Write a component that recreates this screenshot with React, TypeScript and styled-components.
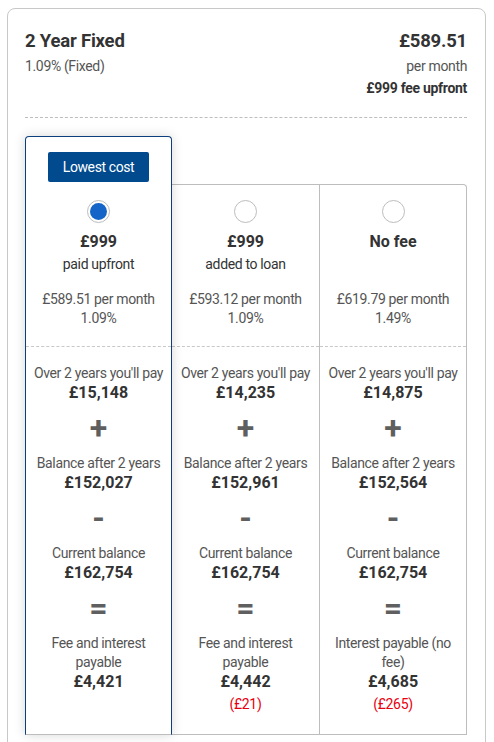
import React from "react";
import styled, { createGlobalStyle } from "styled-components";

const GlobalStyle = createGlobalStyle`
  html, body {
    margin: 0;
    overflow: hidden;
    background: #fff;
    font-family: Roboto, "Liberation Sans", sans-serif;
    color: #333;
  }
`;

const PageSc = styled.div`
  padding: 8px 8px 0 7px;
`;

const CardSc = styled.div`
  border: 1px solid #c8c8c8;
  border-radius: 8px;
  padding: 20px 18px 40px 17px;
`;

const HeaderSc = styled.div`
  display: flex;
  justify-content: space-between;
  align-items: flex-start;
`;

const HeaderSideSc = styled.div<{ $right?: boolean }>`
  display: flex;
  flex-direction: column;
  align-items: ${(p) => (p.$right ? "flex-end" : "flex-start")};
`;

const TitleSc = styled.div`
  font-size: 18.5px;
  font-weight: 700;
  line-height: 24px;
  letter-spacing: -0.2px;
  color: #333;
`;

const SubtleSc = styled.div`
  margin-top: 3px;
  font-size: 14px;
  line-height: 20px;
  letter-spacing: -0.35px;
  color: #555;
`;

const FeeSc = styled.div`
  margin-top: 2px;
  font-size: 14px;
  font-weight: 700;
  line-height: 20px;
  letter-spacing: -0.3px;
  color: #333;
`;

const DividerSc = styled.div`
  margin: 19px 0 18px;
  border-top: 1px dashed #bdbdbd;
`;

const TableSc = styled.div`
  display: grid;
  grid-template-columns: 147px 148px 147px;
  align-items: stretch;
`;

const ColumnSc = styled.div<{ $selected?: boolean; $last?: boolean }>`
  position: relative;
  display: flex;
  flex-direction: column;
  align-items: center;
  text-align: center;
  background: #fff;
  border-bottom: 1px solid #bdbdbd;
  padding-top: 15px;
  ${(p) =>
    p.$selected
      ? `
    z-index: 1;
    border: 1px solid #0d3f7c;
    border-bottom-color: #bdbdbd;
    border-radius: 4px 4px 0 0;
    box-shadow: 0 0 12px rgba(0, 0, 0, 0.16);
  `
      : `
    margin-top: 48px;
    border-top: 1px solid #bdbdbd;
    border-right: 1px solid #bdbdbd;
  `}
  ${(p) => (p.$last ? "border-top-right-radius: 4px;" : "")}
`;

const BadgeSc = styled.div`
  height: 30px;
  padding: 0 15px;
  margin-bottom: 18px;
  display: flex;
  align-items: center;
  background: #004a8d;
  border-radius: 2px;
  color: #fff;
  font-size: 14px;
  letter-spacing: -0.4px;
`;

const RadioSc = styled.div<{ $checked?: boolean }>`
  box-sizing: border-box;
  width: 23px;
  height: 23px;
  border-radius: 50%;
  border: 1px solid #bdbdbd;
  padding: 2px;
  background: #fff;
  &::after {
    content: "";
    display: ${(p) => (p.$checked ? "block" : "none")};
    width: 100%;
    height: 100%;
    border-radius: 50%;
    background: #1565c8;
  }
`;

const OptionTitleSc = styled.div`
  margin-top: 8px;
  font-size: 16px;
  font-weight: 700;
  line-height: 22px;
  color: #333;
`;

const OptionSubSc = styled.div`
  margin-top: 1px;
  height: 20px;
  font-size: 14px;
  line-height: 20px;
  letter-spacing: -0.35px;
  color: #333;
`;

const RateSc = styled.div`
  margin-top: 16px;
  margin-bottom: 18px;
  font-size: 14px;
  line-height: 19px;
  letter-spacing: -0.35px;
  color: #555;
`;

const BreakdownSc = styled.div`
  align-self: stretch;
  display: flex;
  flex-direction: column;
  align-items: center;
  border-top: 1px dashed #c8c8c8;
  padding: 17px 6px 20px;
  flex: 1;
`;

const LabelSc = styled.div`
  font-size: 14px;
  line-height: 19px;
  letter-spacing: -0.35px;
  color: #555;
`;

const ValueSc = styled.div`
  font-size: 16px;
  font-weight: 700;
  line-height: 20px;
  color: #333;
`;

const SignSc = styled.div`
  height: 51px;
  font-size: 32px;
  font-weight: 700;
  line-height: 51px;
  color: #5f5f5f;
`;

const DiffSc = styled.div`
  margin-top: 2px;
  font-size: 14px;
  line-height: 20px;
  letter-spacing: -0.3px;
  color: #e8000f;
`;

type Option = {
  title: string;
  sub: string;
  monthly: string;
  rate: string;
  total: string;
  balanceAfter: string;
  interestLabel: string;
  interest: string;
  diff?: string;
};

const options: Option[] = [
  {
    title: "£999",
    sub: "paid upfront",
    monthly: "£589.51 per month",
    rate: "1.09%",
    total: "£15,148",
    balanceAfter: "£152,027",
    interestLabel: "Fee and interest payable",
    interest: "£4,421",
  },
  {
    title: "£999",
    sub: "added to loan",
    monthly: "£593.12 per month",
    rate: "1.09%",
    total: "£14,235",
    balanceAfter: "£152,961",
    interestLabel: "Fee and interest payable",
    interest: "£4,442",
    diff: "(£21)",
  },
  {
    title: "No fee",
    sub: "",
    monthly: "£619.79 per month",
    rate: "1.49%",
    total: "£14,875",
    balanceAfter: "£152,564",
    interestLabel: "Interest payable (no fee)",
    interest: "£4,685",
    diff: "(£265)",
  },
];

export default function App() {
  return (
    <PageSc>
      <GlobalStyle />
      <CardSc>
        <HeaderSc>
          <HeaderSideSc>
            <TitleSc>2 Year Fixed</TitleSc>
            <SubtleSc>1.09% (Fixed)</SubtleSc>
          </HeaderSideSc>
          <HeaderSideSc $right>
            <TitleSc>£589.51</TitleSc>
            <SubtleSc>per month</SubtleSc>
            <FeeSc>£999 fee upfront</FeeSc>
          </HeaderSideSc>
        </HeaderSc>
        <DividerSc />
        <TableSc>
          {options.map((o, i) => (
            <ColumnSc key={i} $selected={i === 0} $last={i === options.length - 1}>
              {i === 0 && <BadgeSc>Lowest cost</BadgeSc>}
              <RadioSc $checked={i === 0} />
              <OptionTitleSc>{o.title}</OptionTitleSc>
              <OptionSubSc>{o.sub}</OptionSubSc>
              <RateSc>
                {o.monthly}
                <br />
                {o.rate}
              </RateSc>
              <BreakdownSc>
                <LabelSc>Over 2 years you'll pay</LabelSc>
                <ValueSc>{o.total}</ValueSc>
                <SignSc>+</SignSc>
                <LabelSc>Balance after 2 years</LabelSc>
                <ValueSc>{o.balanceAfter}</ValueSc>
                <SignSc>-</SignSc>
                <LabelSc>Current balance</LabelSc>
                <ValueSc>£162,754</ValueSc>
                <SignSc>=</SignSc>
                <LabelSc>{o.interestLabel}</LabelSc>
                <ValueSc>{o.interest}</ValueSc>
                {o.diff && <DiffSc>{o.diff}</DiffSc>}
              </BreakdownSc>
            </ColumnSc>
          ))}
        </TableSc>
      </CardSc>
    </PageSc>
  );
}
